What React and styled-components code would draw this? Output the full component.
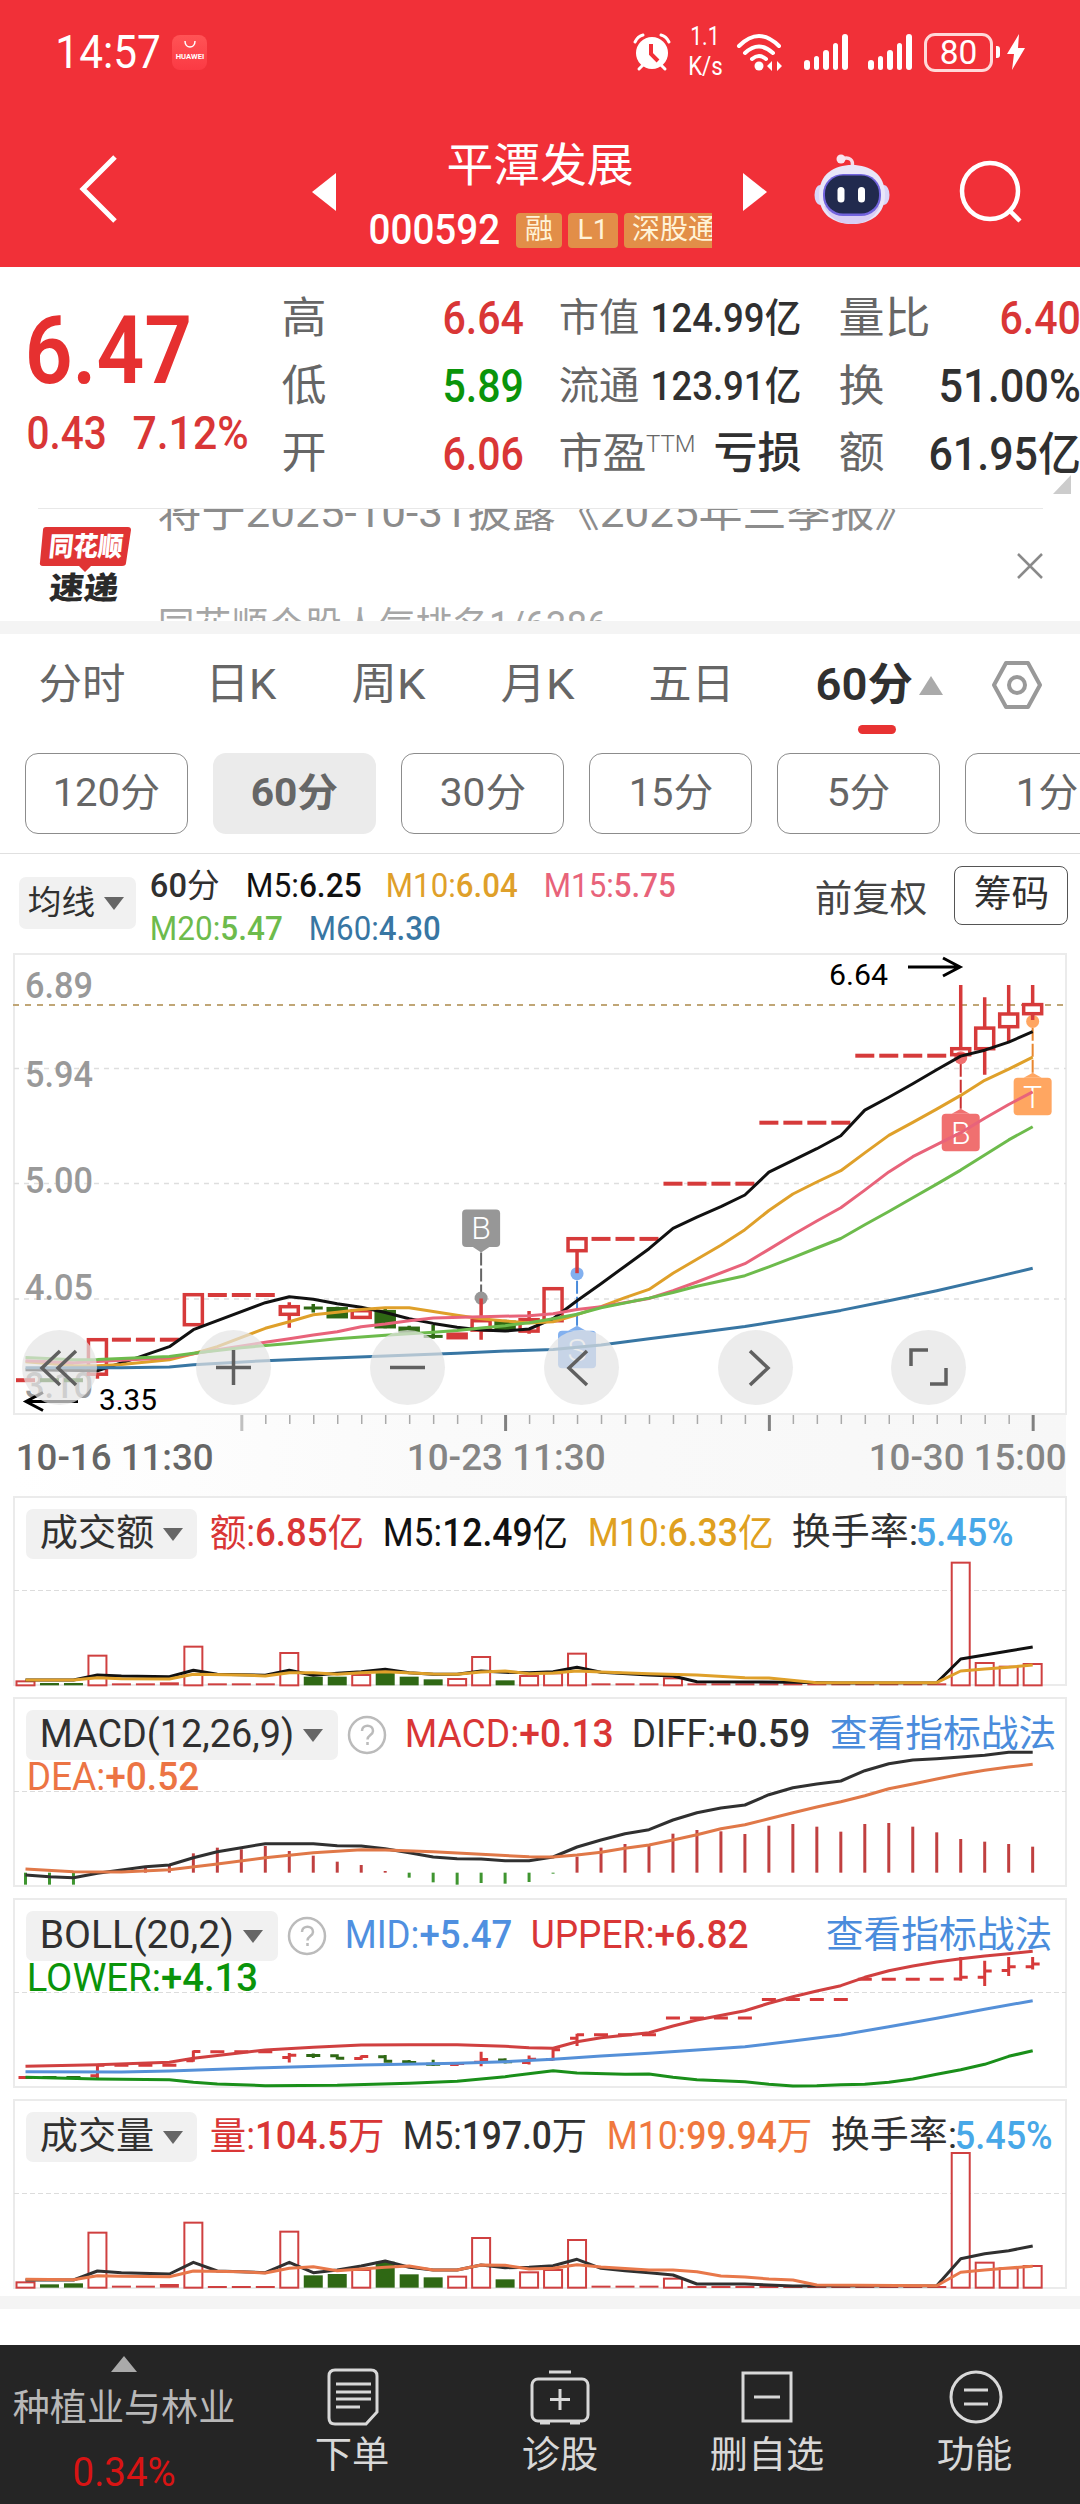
import { useLayoutEffect, useRef, useState } from 'react'
import styled, { createGlobalStyle } from 'styled-components'

const RED = '#d93636'
const GREEN = '#0a940a'
const DARK = '#303030'
const CANDLE_RED = '#d63a3a'
const CANDLE_GREEN = '#2f6814'

const GlobalStyle = createGlobalStyle`
  body {
    margin: 0;
    background: #fff;
    font-family: Roboto, "Noto Sans CJK SC", sans-serif;
  }
  svg { display: block; flex-shrink: 0; overflow: visible; }
`

const Page = styled.div`
  width: 1080px;
  height: 2504px;
  overflow: hidden;
  display: flex;
  flex-direction: column;
  background: #fff;
  & > * { flex-shrink: 0; }
`

/* ---------- text squeezed to a given width ---------- */
const FitBox = styled.span`
  display: inline-block;
  flex-shrink: 0;
  width: ${p => p.$w}px;
  line-height: 1.2;
  font-size: ${p => p.$size}px;
  font-weight: ${p => p.$weight || 400};
  color: ${p => p.$color || 'inherit'};
  white-space: nowrap;
`
const FitInner = styled.span`
  display: inline-block;
  transform-origin: 0 50%;
`

function Txt({ w, size, weight, color, children }) {
  const ref = useRef(null)
  const [scale, setScale] = useState(1)
  useLayoutEffect(() => {
    setScale((w + size * 0.07) / ref.current.offsetWidth)
  }, [w, size, children])
  return (
    <FitBox $w={w} $size={size} $weight={weight} $color={color}>
      <FitInner ref={ref} style={{ transform: `translateX(${-size * 0.035}px) scaleX(${scale})` }}>{children}</FitInner>
    </FitBox>
  )
}

/* ---------- header ---------- */
const Header = styled.header`
  height: 267px;
  background: #f13038;
  color: #fff;
`
const StatusBar = styled.div`
  height: 104px;
  box-sizing: border-box;
  padding: 0 55px 0 57px;
  display: flex;
  align-items: center;
`
const StoreBadge = styled.div`
  width: 35px;
  height: 35px;
  margin-left: 13px;
  border-radius: 8px;
  background: linear-gradient(#ff5355, #fb3a44);
  display: flex;
  flex-direction: column;
  align-items: center;
`
const StatusIcons = styled.div`
  margin-left: auto;
  display: flex;
  align-items: center;
`
const Speed = styled.div`
  width: 34px;
  margin: 0 14px 0 17px;
  display: flex;
  flex-direction: column;
  align-items: center;
  line-height: 22px;
`
const Signal = styled.div`
  display: flex;
  align-items: flex-end;
  gap: 4px;
  height: 36px;
  margin-left: 20px;
`
const SignalBar = styled.i`
  width: 5.6px;
  height: ${p => p.$h}px;
  border-radius: 3px;
  background: #fff;
`
const Battery = styled.div`
  width: 63px;
  height: 33px;
  margin-left: 12px;
  border: 3px solid #ffd9d9;
  border-radius: 11px;
  display: flex;
  align-items: center;
  justify-content: center;
`
const BatteryTip = styled.i`
  width: 4px;
  height: 12px;
  margin: 0 7px 0 3px;
  border-radius: 0 3px 3px 0;
  background: #fff;
`
const TitleBar = styled.div`
  height: 163px;
  display: flex;
  align-items: flex-start;
  padding-left: 77px;
`
const BarIcon = styled.div`
  margin: ${p => p.$top}px 0 0 ${p => p.$left || 0}px;
`
const StockTitle = styled.div`
  width: 342px;
  margin: 34px 31px 0 34px;
  display: flex;
  flex-direction: column;
`
const StockName = styled.div`
  height: 57px;
  line-height: 1;
  padding-left: 78px;
`
const CodeRow = styled.div`
  height: 70px;
  display: flex;
  align-items: center;
`
const TagStrip = styled.div`
  flex: 1;
  margin-left: 17px;
  display: flex;
  gap: 6px;
  overflow: hidden;
`
const Tag = styled.span`
  flex-shrink: 0;
  width: ${p => p.$w}px;
  height: 35px;
  border-radius: 4px;
  background: #e28e48;
  color: #fff3d8;
  font-size: 28px;
  line-height: 34px;
  text-align: center;
  white-space: nowrap;
`

/* ---------- quote ---------- */
const Quote = styled.section`
  height: 241px;
  display: flex;
  position: relative;
`
const PriceBlock = styled.div`
  width: 283px;
  padding: 28px 0 0 28px;
  box-sizing: border-box;
`
const Change = styled.div`
  display: flex;
  gap: 29px;
  margin-top: -2px;
`
const QuoteCol = styled.div`
  width: ${p => p.$w}px;
  margin-right: ${p => p.$right}px;
  padding-top: 18px;
`
const QuoteRow = styled.div`
  height: 67.7px;
  display: flex;
  align-items: center;
  justify-content: space-between;
  color: #666;
`
const Label = styled.span`
  display: flex;
  align-items: center;
`
const Sup = styled.sup`
  font-size: 24px;
  line-height: 24px;
  font-weight: 300;
  margin: -20px 0 0 1px;
`
const Corner = styled.i`
  position: absolute;
  right: 9px;
  bottom: 14px;
  border: solid transparent;
  border-width: 0 0 19px 18px;
  border-bottom-color: #ccc;
`

/* ---------- news ---------- */
const News = styled.section`
  height: 113px;
  box-sizing: border-box;
  margin: 0 37px 0 38px;
  border-top: 1px solid #e8e8e8;
  display: flex;
  overflow: hidden;
`
const NewsLogo = styled.div`
  width: 94px;
  margin: 18px 27px 0 0;
`
const Ticker = styled.div`
  flex: 1;
  height: 138px;
  display: flex;
  flex-direction: column;
  margin-top: -20px;
`
const TickerLine = styled.div`
  height: 115px;
  flex-shrink: 0;
  color: ${p => p.$color};
`
const CloseIcon = styled.div`
  padding-top: 44px;
`
const Band = styled.div`
  height: 13px;
  background: #f4f4f4;
`

/* ---------- tabs ---------- */
const Tabs = styled.nav`
  height: 119px;
  box-sizing: border-box;
  padding: 21px 0 0 40px;
  display: flex;
`
const Tab = styled.div`
  width: ${p => p.$w}px;
  height: 82px;
  margin-left: ${p => p.$left || 0}px;
  display: flex;
  flex-direction: column;
  color: #666;
`
const TabText = styled.div`
  height: 60px;
  display: flex;
  align-items: center;
  gap: 8px;
`
const Indicator = styled.i`
  width: 38px;
  height: 9px;
  margin: 10px 0 0 41px;
  border-radius: 5px;
  background: #e83232;
`
const Periods = styled.div`
  height: 101px;
  box-sizing: border-box;
  padding-left: 25px;
  display: flex;
  gap: 25px;
  border-bottom: 1px solid #e0e0e0;
  overflow: hidden;
`
const Period = styled.div`
  flex-shrink: 0;
  width: 163px;
  height: 81px;
  box-sizing: border-box;
  border: ${p => (p.$on ? 'none' : '1px solid #8c8c8c')};
  border-radius: 13px;
  background: ${p => (p.$on ? '#ebebeb' : '#fff')};
  color: #666;
  display: flex;
  align-items: center;
  justify-content: center;
`

/* ---------- legends ---------- */
const AverageBar = styled.div`
  height: 99px;
  display: flex;
  align-items: flex-start;
  box-sizing: border-box;
  padding: 11px 12px 0 19px;
`
const PillSlot = styled.div`
  padding-top: 12px;
`
const Pill = styled.div`
  height: ${p => p.$h || 50}px;
  box-sizing: border-box;
  padding: 0 ${p => p.$right || 15}px 0 ${p => p.$left || 15}px;
  border-radius: 7px;
  background: #f1f1f1;
  color: ${DARK};
  display: flex;
  align-items: center;
  gap: 10px;
  flex-shrink: 0;
`
const AverageLegend = styled.div`
  width: 665px;
  margin: -1px 0 0 15px;
`
const AverageRow = styled.div`
  height: 43px;
  display: flex;
  align-items: center;
  gap: 27.5px;
`
const Adjust = styled.div`
  margin-top: 13px;
`
const ChipButton = styled.div`
  width: 114px;
  height: 59px;
  margin: 1px 0 0 28px;
  box-sizing: border-box;
  border: 1.5px solid #555;
  border-radius: 8px;
  display: flex;
  align-items: center;
  justify-content: center;
`

/* ---------- charts ---------- */
const ChartArea = styled.section`
  display: grid;
  height: 462px;
`
const Layer = styled.div`
  grid-area: 1 / 1;
`
const Tools = styled.div`
  grid-area: 1 / 1;
  align-self: start;
  display: flex;
  gap: 98.9px;
  margin: 377px 0 0 22px;
`
const Tool = styled.div`
  width: 75px;
  height: 75px;
  border-radius: 50%;
  background: rgba(228, 228, 228, 0.7);
  display: flex;
  align-items: center;
  justify-content: center;
`
const Axis = styled.div`
  height: 81px;
  margin: 0 14px;
  background: linear-gradient(90deg, #fff, #fafafa 40%, #f7f7f7);
`
const Dates = styled.div`
  display: grid;
  grid-template-columns: 391px 462px auto;
  padding: 2px 0 0 3px;
`
const Panel = styled.section`
  display: grid;
  height: 190px;
  margin-bottom: ${p => (p.$last ? 7 : 11)}px;
`
const Legend = styled.div`
  grid-area: 1 / 1;
  padding: 13px 26px 0;
`
const LegendRow = styled.div`
  height: 50px;
  display: flex;
  align-items: center;
  gap: 21.5px;
`
const LegendSecond = styled.div`
  height: 36px;
  padding-left: 2px;
  display: flex;
  align-items: center;
`
const Heading = styled.div`
  display: flex;
  align-items: center;
  gap: 9px;
  margin-right: ${p => p.$right}px;
`
const Pair = styled.div`
  display: flex;
`
const TacticsLink = styled.div`
  margin: 0 3px 0 auto;
`
const Thin = styled.span`
  font-weight: 400;
`

/* ---------- bottom bar ---------- */
const BottomBar = styled.footer`
  height: 159px;
  margin-top: 36px;
  background: #252525;
  display: flex;
`
const Sector = styled.div`
  width: 248px;
  display: flex;
  flex-direction: column;
  align-items: center;
  padding-top: 11px;
`
const SectorName = styled.div`
  margin: 15px 0 18px;
`
const Action = styled.div`
  width: 207.7px;
  padding-top: 22px;
  display: flex;
  flex-direction: column;
  align-items: center;
  gap: 7px;
  color: #d8d8d8;
`

const Tri = ({ w = 20, h = 13, up, color = '#666' }) => (
  <svg width={w} height={h}>
    <path d={up ? `M0 ${h}L${w / 2} 0L${w} ${h}z` : `M0 0H${w}L${w / 2} ${h}z`} fill={color} />
  </svg>
)

const Help = () => (
  <svg width="40" height="40" viewBox="0 0 40 40" fill="none" stroke="#bbb">
    <circle cx="20" cy="20" r="18" strokeWidth="2.5" />
    <path d="M15 16c0-7 11-7 11 0 0 4-5.500 4-5.500 8.500M20.500 27v3" strokeWidth="2.500" />
  </svg>
)

const Robot = () => (
  <svg width="76" height="72" viewBox="0 0 76 72">
    <path d="M28 5C35 2 40 6 38 13" stroke="#f7dce8" strokeWidth="3.500" fill="none" />
    <circle cx="27" cy="5" r="4.500" fill="#f8e5f0" />
    <ellipse cx="6" cy="41" rx="5.500" ry="10" fill="#d9d6f8" />
    <ellipse cx="70" cy="41" rx="5.500" ry="10" fill="#d9d6f8" />
    <path d="M38 11C56 11 71 20 71 41C71 60 57 70 38 70C19 70 5 60 5 41C5 20 20 11 38 11z" fill="#e9e6f8" />
    <path d="M10 52c6 14 18 18 28 18s22-4 28-18z" fill="#d8cdf4" />
    <rect x="9" y="20" width="58" height="42" rx="20" fill="#7264dd" />
    <rect x="11" y="21.500" width="54" height="38" rx="18" fill="#212a4e" />
    <rect x="23.500" y="33" width="7" height="15.500" rx="3.500" fill="#fff" />
    <rect x="44" y="33" width="7" height="15.500" rx="3.500" fill="#fff" />
  </svg>
)

/* ---------- chart data ---------- */
const X0 = 25.5
const STEP = 23.98
const x = i => X0 + STEP * i

const Line = ({ data, color, y = v => v, width = 3 }) => (
  <polyline
    points={data.map(([i, v]) => `${x(i).toFixed(1)},${y(v).toFixed(1)}`).join(' ')}
    fill="none"
    stroke={color}
    strokeWidth={width}
    strokeLinejoin="round"
  />
)

const ma5 = [[0, 416], [3, 417], [4.7, 403.7], [6, 393], [7, 376], [10, 349], [11, 343], [12, 345.5], [13, 350], [14, 353.6], [15, 358.8], [16, 365], [17, 369.7], [18, 373.5], [19, 376.4], [20, 377.4], [21, 375.3], [22, 365], [23, 347], [24, 330], [25, 312.5], [26, 295], [27, 274.6], [28, 263.4], [29, 253], [30, 241.3], [31, 218.5], [32, 206.6], [33, 195], [34, 182], [35, 156.4], [36, 143.5], [37, 130], [38, 116], [39, 102.4], [40, 96.5], [41, 88.4], [42, 77.9]]
const ma10 = [[0, 408], [2, 411.8], [3, 412], [4, 410.7], [6, 406], [7, 400], [8, 393], [10, 374.6], [11, 368], [12, 361], [13, 358.5], [14, 355.7], [15, 354], [16, 354], [17, 357.8], [18, 361.6], [19, 365], [20, 367.2], [21, 369.3], [22, 368], [23, 361], [24, 353], [25, 344], [26, 335.7], [27, 319.5], [28, 305.5], [29, 291.5], [30, 276], [31, 256.8], [32, 240.3], [33, 228.3], [34, 217], [35, 199.2], [36, 181.7], [37, 168.7], [38, 155.4], [39, 141.7], [40, 126.6], [41, 115.4], [42, 103.5]]
const ma15 = [[0, 407], [2, 409], [6, 404], [8, 396], [10, 388.6], [11, 385], [12, 381.3], [13, 378], [14, 373], [15, 370.4], [16, 367], [17, 364.4], [19, 363], [21, 362], [22, 360], [23, 355.7], [24, 353], [26, 344.8], [27, 337], [28, 328.3], [30, 310], [31, 295.7], [32, 281], [33, 267.3], [34, 254], [35, 236.4], [36, 218.2], [37, 203], [38, 191], [39, 179], [40, 164.5], [41, 150.8], [42, 138.2]]
const ma20 = [[0, 403.7], [2, 406], [3, 405.8], [5, 403.7], [6, 402.7], [7, 399.5], [9, 394], [11, 389.7], [13, 385], [15, 381.6], [17, 378.5], [18, 376.7], [19, 374.3], [20, 372], [21, 369], [22, 365], [23, 360.6], [24, 354], [26, 344.4], [27, 338.8], [28, 332.5], [30, 322], [31, 313.2], [32, 304], [33, 294.3], [34, 284.8], [35, 271], [36, 257.8], [37, 244], [38, 230.4], [39, 216.4], [40, 201.3], [41, 186.2], [42, 173]]
const ma60 = [[0, 414], [4, 414], [6, 413.2], [7, 411], [10, 407], [12, 405], [15, 402.3], [18, 399.5], [20, 397.4], [22, 395.7], [24, 391.4], [26, 385], [28, 379], [30, 372.9], [32, 365], [34, 356.7], [36, 347], [38, 337], [40, 325.9], [42, 314.6]]

// [body top, body bottom, high, low, falling]
const flat = (y, n, down) => Array.from({ length: n }, () => [y, y, y, y, down])
const candles = [
  ...flat(426.5, 1),
  ...flat(426.5, 2, true),
  [386, 420.5, 386, 425],
  ...flat(386, 3),
  [341, 371, 341, 371],
  ...flat(341.3, 3),
  [353, 360.6, 348.6, 374],
  [354.3, 354.3, 350.4, 358.8, true],
  [355, 363, 353, 364, true],
  [357, 363.7, 357, 365],
  [358, 373, 355.3, 374.6, true],
  [374.6, 377.4, 372, 381, true],
  [382.7, 382.7, 371, 385, true],
  [380.5, 384, 380, 385],
  [367, 376.4, 344.8, 386],
  [368.6, 375, 366, 377.4, true],
  [366, 377.4, 357.4, 380],
  [335, 367, 335, 367],
  [285, 297, 285, 319.5],
  ...flat(285.2, 3),
  ...flat(230, 4),
  ...flat(169, 4),
  ...flat(102, 4),
  [95, 101, 31.2, 103],
  [74.4, 95, 43.5, 121],
  [60.3, 73, 31.2, 88],
  [50.9, 60, 31.2, 66.3],
]

const Candle = ({ i, c: [top, bottom, high, low, down] }) => {
  const color = down ? CANDLE_GREEN : CANDLE_RED
  return (
    <g stroke={color} fill={down ? color : 'none'} strokeWidth="3.500">
      {top === bottom ? (
        <path d={`M${x(i) - 9.5} ${top}h19`} strokeWidth={high === low ? 4 : 3} />
      ) : (
        <rect x={x(i) - 9} y={top} width="18" height={bottom - top} />
      )}
      <path d={`M${x(i)} ${high}V${top}M${x(i)} ${bottom}V${low}`} />
    </g>
  )
}

const Marker = ({ i, top, dot, letter, color, line, below }) => {
  const cx = x(i)
  const tip = below ? top + 43 : top - 5
  const edge = below ? top + 37 : top
  return (
    <g>
      <path d={`M${cx} ${tip}V${dot}`} stroke={line} strokeWidth="2" strokeDasharray="13 3" />
      <circle cx={cx} cy={dot} r="6.500" fill={color} />
      <rect x={cx - 19} y={top} width="38" height="37.500" rx="4" fill={color} />
      <path d={`M${cx - 9} ${edge}L${cx} ${tip}L${cx + 9} ${edge}z`} fill={color} />
      <text x={cx} y={top + 30} textAnchor="middle" fontSize="32" fontWeight="300" fill="#fff">{letter}</text>
    </g>
  )
}

const priceLabels = [['6.89', 44.5], ['5.94', 133.5], ['5.00', 239.5], ['4.05', 346.5], ['3.10', 445]]

const PriceChart = () => (
  <svg width="1080" height="462">
    <rect x="14" y="1" width="1052" height="460" fill="none" stroke="#ebebeb" strokeWidth="2" />
    {[115.5, 230.5, 346].map(y => (
      <path key={y} d={`M14 ${y}H1066`} stroke="#dedede" strokeWidth="1.500" strokeDasharray="5 5" />
    ))}
    <path d="M13 52H1066" stroke="#c0a676" strokeWidth="2" strokeDasharray="6 6" />
    {priceLabels.map(([t, y]) => (
      <text key={t} x="25" y={y} fontSize="36" fontWeight="500" fill="#999" textLength="68" lengthAdjust="spacingAndGlyphs">{t}</text>
    ))}
    <g transform="translate(0 .7)">
      <Marker i={19} top={255.700} dot={344.400} letter="B" color="#979797" line="#666" below />
      <Marker i={23} top={377} dot={320} letter="S" color="#82b0ef" line="#4a8cdc" />
      <Marker i={39} top={160} dot={104} letter="B" color="#f07070" line="#c93030" />
      <Marker i={42} top={124} dot={67.700} letter="T" color="#ffa661" line="#e8862e" />
      {candles.map((c, i) => <Candle key={i} i={i} c={c} />)}
      <Line data={ma5} color="#111" />
      <Line data={ma10} color="#dfa02a" />
      <Line data={ma15} color="#e8637a" />
      <Line data={ma20} color="#6dbb4c" />
      <Line data={ma60} color="#3876a3" />
    </g>
    <g fill="none" stroke="#000" strokeWidth="3">
      <path d="M908 14H960M943 5L960 14L943 23" />
      <path d="M78 448.500H26M43 439.500L26 448.500L43 457.500" />
    </g>
    <text x="829" y="32" fontSize="30" textLength="59" lengthAdjust="spacingAndGlyphs">6.64</text>
    <text x="99" y="457" fontSize="30" textLength="58" lengthAdjust="spacingAndGlyphs">3.35</text>
  </svg>
)

const AxisTicks = () => (
  <svg width="1052" height="20" viewBox="14 0 1052 20">
    {Array.from({ length: 34 }, (_, n) => n + 9).map(i => {
      const major = (i - 9) % 11 === 0
      return <path key={i} d={`M${x(i) + 0.5} 0v${major ? 16 : 9}`} stroke={i === 9 ? '#c0c0c0' : major ? '#808080' : '#aaa'} strokeWidth={major ? 3 : 1.5} />
    })}
  </svg>
)

// sub charts keep their values in thirds of a pixel
const scaleFrom = base => v => (v - base) / 3

const Frame = ({ mid, children }) => (
  <svg width="1080" height="190">
    <rect x="14" y="1" width="1052" height="188" fill="none" stroke="#ebebeb" strokeWidth="2" />
    <path d={`M14 ${mid}H1066`} stroke="#dcdcdc" strokeWidth="1.200" strokeDasharray="5 3" />
    {children}
  </svg>
)

const downs = [1, 2, 12, 13, 15, 16, 17, 20]
const Bars = ({ tops, bottom, y }) => tops.map((t, i) => {
  const down = downs.includes(i)
  const h = y(bottom) - y(t)
  const solid = down || h < 4
  const color = down ? CANDLE_GREEN : '#cf4040'
  return (
    <rect
      key={i}
      x={x(i) - (solid ? 9.5 : 9)}
      y={y(t)}
      width={solid ? 19 : 18}
      height={Math.max(h, 2)}
      fill={solid ? color : '#fff'}
      stroke={solid ? 'none' : color}
      strokeWidth="2"
    />
  )
})
const rep = (v, n) => Array(n).fill(v)

const amountTops = [574, 579, 579, 497, 580, 580, 577, 470, 580, 580, 580, 489, 560, 560, 555, 548, 560, 568, 567, 501, 571, 558, 550, 491, 580, 580, 580, 565, ...rep(580, 11), 218, 519, 530, 522]
const amount5 = [[0, 570], [2, 570], [3, 555], [4, 558], [6, 560], [7, 541], [8, 553], [10, 556], [11, 541], [12, 556], [13, 550], [14, 545], [15, 538], [16, 548], [17, 553], [18, 553], [19, 543], [20, 547], [21, 548], [22, 545], [23, 532], [24, 547], [26, 555], [27, 558], [28, 575], [32, 577], [34, 579], [38, 578], [39, 507], [40, 495], [41, 483], [42, 471]]
const amount10 = [[0, 570], [2, 570], [3, 563], [4, 566], [6, 567], [7, 553], [9, 555], [10, 558], [11, 548], [12, 548], [13, 553], [14, 548], [15, 545], [17, 552], [18, 553], [19, 546], [20, 543], [21, 551], [22, 549], [23, 543], [24, 546], [26, 551], [28, 555], [30, 563], [31, 564], [33, 578], [38, 578], [39, 543], [40, 537], [41, 532], [42, 525]]

const AmountChart = () => {
  const y = scaleFrom(18)
  return (
    <Frame mid={94.5}>
      <Bars tops={amountTops} bottom={586} y={y} />
      <Line data={amount5} color="#111" y={y} />
      <Line data={amount10} color="#dfa02a" y={y} />
    </Frame>
  )
}

const macdBars = [1184, 1184, 1184, 1148, 1140, 1132, 1124, 1090, 1073, 1078, 1068, 1083, 1097, 1115, 1125, 1143, 1163, 1177, 1184, 1179, 1181, 1176, 1151, 1100, 1073, 1062, 1067, 1031, 1020, 1024, 1032, 1007, 1002, 1010, 1025, 1002, 999, 1010, 1027, 1047, 1055, 1062, 1070]
const diff = [[0, 1155], [1, 1160], [2, 1163], [3, 1150], [4, 1140], [5, 1130], [6, 1125], [7, 1103], [8, 1085], [9, 1073], [10, 1061], [12, 1061], [13, 1067], [14, 1068], [15, 1076], [16, 1088], [17, 1101], [18, 1106], [19, 1107], [20, 1112], [21, 1112], [22, 1101], [23, 1071], [24, 1050], [25, 1031], [26, 1019], [27, 990], [28, 968], [29, 954], [30, 945], [31, 914], [32, 893], [33, 882], [34, 873], [35, 842], [36, 821], [37, 810], [38, 806], [39, 801], [40, 796], [41, 787], [42, 787]]
const dea = [[0, 1137], [2, 1145], [4, 1146], [6, 1139], [8, 1122], [10, 1103], [12, 1088], [14, 1079], [15, 1080], [17, 1085], [19, 1093], [21, 1100], [22, 1101], [23, 1095], [24, 1087], [25, 1075], [26, 1065], [27, 1050], [28, 1034], [29, 1016], [30, 1004], [31, 986], [32, 968], [33, 951], [34, 935], [35, 917], [36, 896], [37, 882], [38, 867], [39, 853], [40, 841], [41, 831], [42, 823]]

const MacdChart = () => {
  const y = scaleFrom(621)
  return (
    <Frame mid={94.5}>
      {macdBars.map((v, i) => (
        <path key={i} d={`M${x(i)} ${y(1148)}V${y(v)}`} stroke={v > 1148 ? '#3f9530' : '#c04040'} strokeWidth="3" />
      ))}
      <Line data={diff} color="#303030" y={y} />
      <Line data={dea} color="#e07848" y={y} />
    </Frame>
  )
}

const upper = [[0, 529], [3, 524], [6, 517], [7, 505], [9, 488], [10, 480], [12, 472], [14, 465], [16, 464], [18, 464], [20, 469], [21, 473], [22, 475], [23, 455], [24, 443], [26, 428], [27, 408], [28, 390], [30, 362], [31, 340], [32, 320], [33, 303], [34, 287], [35, 262], [36, 242], [37, 228], [38, 216], [39, 206], [40, 198], [41, 191], [42, 184]]
const middle = [[0, 545], [4, 546], [6, 543], [10, 533], [14, 525], [18, 520], [20, 515], [22, 508], [24, 498], [26, 490], [28, 480], [30, 470], [32, 453], [34, 435], [36, 410], [38, 385], [40, 358], [42, 332]]
const lower = [[0, 562], [3, 567], [6, 569], [7, 577], [8, 582], [10, 587], [13, 586], [16, 580], [18, 574], [20, 560], [22, 542], [23, 549], [25, 553], [26, 552], [27, 562], [28, 569], [30, 575], [31, 583], [32, 588], [33, 587], [34, 584], [35, 583], [36, 577], [37, 567], [38, 553], [39, 539], [40, 523], [41, 499], [42, 482]]

const BollChart = () => {
  const y = scaleFrom(24)
  const p = v => y(268 + 0.907 * (v - 102))
  return (
    <Frame mid={94.5}>
      {candles.map(([top, bottom, high, low, down], i) => (
        <path
          key={i}
          d={`M${x(i) - 7} ${p(down ? top : bottom)}H${x(i)}M${x(i)} ${p(down ? bottom : top)}h7M${x(i)} ${p(high) - 1}V${p(low) + 1}`}
          stroke={down ? CANDLE_GREEN : CANDLE_RED}
          strokeWidth="3"
        />
      ))}
      <Line data={upper} color="#d04040" y={y} />
      <Line data={middle} color="#5590d8" y={y} />
      <Line data={lower} color="#1a8f1a" y={y} />
    </Frame>
  )
}

const volumeTops = [1177, 1183, 1180, 1028, 1187, 1187, 1182, 998, 1188, 1188, 1188, 1025, 1156, 1152, 1140, 1115, 1153, 1162, 1160, 1044, 1168, 1147, 1140, 1050, 1187, 1187, 1187, 1166, ...rep(1188, 11), 789, 1118, 1135, 1128]
const volume5 = [[0, 1170], [2, 1170], [3, 1143], [4, 1148], [6, 1152], [7, 1117], [8, 1143], [10, 1148], [11, 1117], [12, 1148], [13, 1140], [14, 1128], [15, 1113], [16, 1132], [17, 1140], [18, 1140], [19, 1125], [20, 1133], [21, 1132], [22, 1127], [23, 1108], [24, 1135], [25, 1142], [26, 1148], [27, 1155], [28, 1182], [30, 1182], [32, 1188], [38, 1187], [39, 1106], [40, 1091], [41, 1082], [42, 1068]]
const volume10 = [[0, 1168], [2, 1169], [3, 1157], [4, 1159], [6, 1160], [7, 1143], [9, 1145], [10, 1149], [11, 1135], [12, 1130], [13, 1142], [14, 1137], [15, 1132], [16, 1128], [17, 1140], [18, 1140], [19, 1125], [20, 1126], [21, 1137], [22, 1135], [23, 1124], [24, 1131], [26, 1140], [27, 1140], [28, 1145], [29, 1158], [30, 1161], [31, 1167], [32, 1170], [33, 1185], [38, 1187], [39, 1147], [40, 1140], [41, 1134], [42, 1129]]

const VolumeChart = () => {
  const y = scaleFrom(627)
  return (
    <Frame mid={94.5}>
      <Bars tops={volumeTops} bottom={1193} y={y} />
      <Line data={volume5} color="#303030" y={y} />
      <Line data={volume10} color="#e8784a" y={y} />
    </Frame>
  )
}

const actions = [
  ['下单', 72, (
    <>
      <path d="M13 3h36q6 0 6 6v36l-11 12H13q-6 0-6-6V9q0-6 6-6z" />
      <path d="M14 17h35M14 25h35M14 32h35M14 40h24" />
    </>
  )],
  ['诊股', 74, (
    <>
      <rect x="2" y="12" width="56" height="42" rx="6" />
      <path d="M19 5h22M30 22v21M20 32.500h20M10 56h10M40 56h10" />
    </>
  )],
  ['删自选', 112, (
    <>
      <rect x="6" y="6" width="48" height="48" />
      <path d="M17 30h26" />
    </>
  )],
  ['功能', 73, (
    <>
      <circle cx="31" cy="30" r="25" />
      <path d="M19 23h24M19 37h24" />
    </>
  )],
]

const Stat = ({ label, lw, ls = 43, sup, value, w, size = 46, color = DARK }) => (
  <QuoteRow>
    <Label><Txt w={lw} size={ls}>{label}</Txt>{sup && <Sup>{sup}</Sup>}</Label>
    <Txt w={w} size={size} weight={500} color={color}>{value}</Txt>
  </QuoteRow>
)

// name and unit are drawn lighter than the number
function Item({ w, size = 38, color = DARK, children }) {
  const [, name, number, unit] = children.match(/^(.*:)?([+\d.%]+)(.*)$/)
  return (
    <Txt w={w} size={size} color={color} weight={500}>
      <Thin>{name}</Thin>{number}<Thin>{unit}</Thin>
    </Txt>
  )
}

function App() {
  return (
    <Page>
      <GlobalStyle />
      <Header>
        <StatusBar>
          <Txt w={102} size={47}>14:57</Txt>
          <StoreBadge>
            <svg width="14" height="17" fill="none" stroke="#fff" strokeWidth="1.500"><path d="M2 6c0 8 10 8 10 0" /></svg>
            <Txt w={28} size={8} weight={700}>HUAWEI</Txt>
          </StoreBadge>
          <StatusIcons>
            <svg width="38" height="38" viewBox="0 0 38 38" fill="none" stroke="#fff" strokeWidth="3">
              <circle cx="19" cy="20" r="16" fill="#fff" stroke="none" />
              <path d="M2 9Q5 3 10 2M36 9Q33 3 28 2M6 36l5-5M32 36l-5-5" strokeLinecap="round" />
              <path d="M18 11v10l7 7" stroke="#f13038" strokeWidth="4" />
            </svg>
            <Speed><Txt w={28} size={25}>1.1</Txt><Txt w={33} size={25}>K/s</Txt></Speed>
            <svg width="48" height="38" viewBox="0 0 48 38" fill="none" stroke="#fff" strokeWidth="4">
              <path d="M3 13Q23-7 43 13M9 20Q23 7 37 20M16 26Q23 20 30 26" strokeLinecap="round" />
              <circle cx="23" cy="33" r="4.500" fill="#fff" stroke="none" />
              <path d="M31 33l5-5v10zM46 33l-5-5v10z" fill="#fff" stroke="none" />
            </svg>
            <Signal>{[10, 14, 20, 27, 36].map(h => <SignalBar key={h} $h={h} />)}</Signal>
            <Signal>{[10, 14, 20, 27, 36].map(h => <SignalBar key={h} $h={h} />)}</Signal>
            <Battery><Txt w={35} size={34}>80</Txt></Battery>
            <BatteryTip />
            <svg width="18" height="36" viewBox="0 0 18 36"><path d="M12 0L0 20h7L5 36L18 14H11z" fill="#fff" /></svg>
          </StatusIcons>
        </StatusBar>
        <TitleBar>
          <BarIcon $top={50}>
            <svg width="42" height="70" fill="none" stroke="#fff" strokeWidth="5"><path d="M38 3L6 35L38 67" /></svg>
          </BarIcon>
          <BarIcon $top={69} $left={193}>
            <svg width="24" height="38"><path d="M24 0V38L0 19z" fill="#fff" /></svg>
          </BarIcon>
          <StockTitle>
            <StockName><Txt w={184} size={46}>平潭发展</Txt></StockName>
            <CodeRow>
              <Txt w={129} size={43} weight={500}>000592</Txt>
              <TagStrip>
                <Tag $w={46}>融</Tag>
                <Tag $w={50}>L1</Tag>
                <Tag $w={100}>深股通</Tag>
              </TagStrip>
            </CodeRow>
          </StockTitle>
          <BarIcon $top={69}>
            <svg width="24" height="38"><path d="M0 0V38L24 19z" fill="#fff" /></svg>
          </BarIcon>
          <BarIcon $top={50} $left={47}><Robot /></BarIcon>
          <BarIcon $top={55} $left={68}>
            <svg width="66" height="66" fill="none" stroke="#fff" strokeWidth="4.500">
              <circle cx="32" cy="32" r="28" /><path d="M51 51L62 62" />
            </svg>
          </BarIcon>
        </TitleBar>
      </Header>

      <Quote>
        <PriceBlock>
          <Txt w={161} size={94} weight={600} color="#e63030">6.47</Txt>
          <Change>
            <Txt w={77} size={46} weight={500} color={RED}>0.43</Txt>
            <Txt w={113} size={46} weight={500} color={RED}>7.12%</Txt>
          </Change>
        </PriceBlock>
        <QuoteCol $w={239} $right={38}>
          <Stat label="高" lw={42} value="6.64" w={78} color={RED} />
          <Stat label="低" lw={42} value="5.89" w={78} color={GREEN} />
          <Stat label="开" lw={42} value="6.06" w={78} color={RED} />
        </QuoteCol>
        <QuoteCol $w={240} $right={40}>
          <Stat label="市值" lw={78} ls={39} value="124.99亿" w={148} size={40} />
          <Stat label="流通" lw={78} ls={39} value="123.91亿" w={148} size={40} />
          <Stat label="市盈" lw={85} ls={42} sup="TTM" value="亏损" w={85} size={43} />
        </QuoteCol>
        <QuoteCol $w={239} $right={0}>
          <Stat label="量比" lw={89} value="6.40" w={78} color={RED} />
          <Stat label="换" lw={43} value="51.00%" w={139} />
          <Stat label="额" lw={43} value="61.95亿" w={149} />
        </QuoteCol>
        <Corner />
      </Quote>

      <News>
        <NewsLogo>
          <svg width="94" height="76" viewBox="0 0 94 76">
            <path d="M8 0H90q3 0 3 3L88 36q0 3-4 3H53l-6 6l-6-6H5q-4 0-3-4L5 3q0-3 3-3z" fill="#e03434" />
            <g fontWeight="900" transform="skewX(-6)">
              <text x="13" y="29" fontSize="27" fill="#fff" textLength="74" lengthAdjust="spacingAndGlyphs">同花顺</text>
              <text x="18" y="72" fontSize="31" fill="#2a2a2a" textLength="69" lengthAdjust="spacingAndGlyphs">速递</text>
            </g>
          </svg>
        </NewsLogo>
        <Ticker>
          <TickerLine $color="#8c8c8c"><Txt w={758} size={41}>将于2025-10-31披露《2025年三季报》</Txt></TickerLine>
          <TickerLine $color="#a6a6a6"><Txt w={447} size={38}>同花顺个股人气排名1/6386</Txt></TickerLine>
        </Ticker>
        <CloseIcon>
          <svg width="26" height="26" stroke="#8a8a8a" strokeWidth="2.500"><path d="M1 1L25 25M25 1L1 25" /></svg>
        </CloseIcon>
      </News>
      <Band />

      <Tabs>
        <Tab $w={84}><TabText><Txt w={84} size={42}>分时</Txt></TabText></Tab>
        <Tab $w={68} $left={83}><TabText><Txt w={68} size={43}>日K</Txt></TabText></Tab>
        <Tab $w={71} $left={78}><TabText><Txt w={71} size={43}>周K</Txt></TabText></Tab>
        <Tab $w={71} $left={78}><TabText><Txt w={71} size={43}>月K</Txt></TabText></Tab>
        <Tab $w={83} $left={77}><TabText><Txt w={83} size={42}>五日</Txt></TabText></Tab>
        <Tab $w={127} $left={84}>
          <TabText><Txt w={94} size={44} weight={600} color={DARK}>60分</Txt><Tri w={24} h={19} up color="#aaa" /></TabText>
          <Indicator />
        </Tab>
        <Tab $w={50} $left={48}>
          <TabText>
            <svg width="50" height="50" viewBox="0 0 50 50" fill="none" stroke="#999" strokeWidth="4">
              <path d="M14 3H36L48 25L36 47H14L2 25z" strokeLinejoin="round" /><circle cx="25" cy="25" r="8" />
            </svg>
          </TabText>
        </Tab>
      </Tabs>
      <Periods>
        <Period><Txt w={105} size={39}>120分</Txt></Period>
        <Period $on><Txt w={85} size={39} weight={700}>60分</Txt></Period>
        <Period><Txt w={84} size={39}>30分</Txt></Period>
        <Period><Txt w={82} size={39}>15分</Txt></Period>
        <Period><Txt w={61} size={39}>5分</Txt></Period>
        <Period><Txt w={60} size={39}>1分</Txt></Period>
      </Periods>

      <AverageBar>
        <PillSlot>
          <Pill $h={52} $left={10} $right={12}><Txt w={65} size={33}>均线</Txt><Tri /></Pill>
        </PillSlot>
        <AverageLegend>
          <AverageRow>
            <Item w={68} size={33}>60分</Item>
            <Item w={113} size={34} color="#111">M5:6.25</Item>
            <Item w={130} size={34} color="#dfa02a">M10:6.04</Item>
            <Item w={130} size={34} color="#e8637a">M15:5.75</Item>
          </AverageRow>
          <AverageRow>
            <Item w={131} size={34} color="#6dbb4c">M20:5.47</Item>
            <Item w={130} size={34} color="#3876a3">M60:4.30</Item>
          </AverageRow>
        </AverageLegend>
        <Adjust><Txt w={110} size={37} color="#444">前复权</Txt></Adjust>
        <ChipButton><Txt w={73} size={37} color={DARK}>筹码</Txt></ChipButton>
      </AverageBar>

      <ChartArea>
        <Layer><PriceChart /></Layer>
        <Tools>
          {[
            'M38 21L20 38L38 55M54 21L36 38L54 55',
            'M20 37.500H55M37.500 20V55',
            'M20 37.500H55',
            'M43 21L25 38L43 55',
            'M32 21L50 38L32 55',
            'M20 36V20H37M55 38V54H39',
          ].map(d => (
            <Tool key={d}><svg width="75" height="75" fill="none" stroke="#606060" strokeWidth="3.500"><path d={d} /></svg></Tool>
          ))}
        </Tools>
      </ChartArea>
      <Axis>
        <AxisTicks />
        <Dates>
          <Txt w={195} size={36} weight={500} color="#666">10-16 11:30</Txt>
          <Txt w={196} size={36} weight={500} color="#858585">10-23 11:30</Txt>
          <Txt w={195} size={36} weight={500} color="#858585">10-30 15:00</Txt>
        </Dates>
      </Axis>

      <Panel>
        <Layer><AmountChart /></Layer>
        <Legend>
          <LegendRow>
            <Heading $right={-8}><Pill $right={14}><Txt w={112} size={37}>成交额</Txt><Tri /></Pill></Heading>
            <Item w={152} color={RED}>额:6.85亿</Item>
            <Item w={183} color="#111">M5:12.49亿</Item>
            <Item w={183} color="#dfa020">M10:6.33亿</Item>
            <Pair><Txt w={124} size={37} color={DARK}>换手率:</Txt><Item w={95} color="#48a8e8">5.45%</Item></Pair>
          </LegendRow>
        </Legend>
      </Panel>
      <Panel>
        <Layer><MacdChart /></Layer>
        <Legend>
          <LegendRow>
            <Heading $right={-3}><Pill><Txt w={252} size={38}>MACD(12,26,9)</Txt><Tri /></Pill><Help /></Heading>
            <Item w={206} color={RED}>MACD:+0.13</Item>
            <Item w={176}>DIFF:+0.59</Item>
            <TacticsLink><Txt w={224} size={37} color="#4a8cdc">查看指标战法</Txt></TacticsLink>
          </LegendRow>
          <LegendSecond><Item w={170} color="#ec7444">DEA:+0.52</Item></LegendSecond>
        </Legend>
      </Panel>
      <Panel>
        <Layer><BollChart /></Layer>
        <Legend>
          <LegendRow>
            <Heading $right={-3}><Pill><Txt w={192} size={38}>BOLL(20,2)</Txt><Tri /></Pill><Help /></Heading>
            <Item w={165} color="#4f90e0">MID:+5.47</Item>
            <Item w={215} color={RED}>UPPER:+6.82</Item>
            <TacticsLink><Txt w={224} size={37} color="#4a8cdc">查看指标战法</Txt></TacticsLink>
          </LegendRow>
          <LegendSecond><Item w={229} color={GREEN}>LOWER:+4.13</Item></LegendSecond>
        </Legend>
      </Panel>
      <Panel $last>
        <Layer><VolumeChart /></Layer>
        <Legend>
          <LegendRow>
            <Heading $right={-8}><Pill $right={14}><Txt w={112} size={37}>成交量</Txt><Tri /></Pill></Heading>
            <Item w={172} color={RED}>量:104.5万</Item>
            <Item w={182}>M5:197.0万</Item>
            <Item w={203} color="#f0783e">M10:99.94万</Item>
            <Pair><Txt w={124} size={37} color={DARK}>换手率:</Txt><Item w={95} color="#48a8e8">5.45%</Item></Pair>
          </LegendRow>
        </Legend>
      </Panel>
      <Band />

      <BottomBar>
        <Sector>
          <Tri w={26} h={16} up color="#aaa" />
          <SectorName><Txt w={220} size={37} color="#b8b8b8">种植业与林业</Txt></SectorName>
          <Txt w={100} size={40} color="#d81414">0.34%</Txt>
        </Sector>
        {actions.map(([label, w, art]) => (
          <Action key={label}>
            <svg width="60" height="60" fill="none" stroke="#d8d8d8" strokeWidth="3">{art}</svg>
            <Txt w={w} size={37}>{label}</Txt>
          </Action>
        ))}
      </BottomBar>
    </Page>
  )
}

export default App
